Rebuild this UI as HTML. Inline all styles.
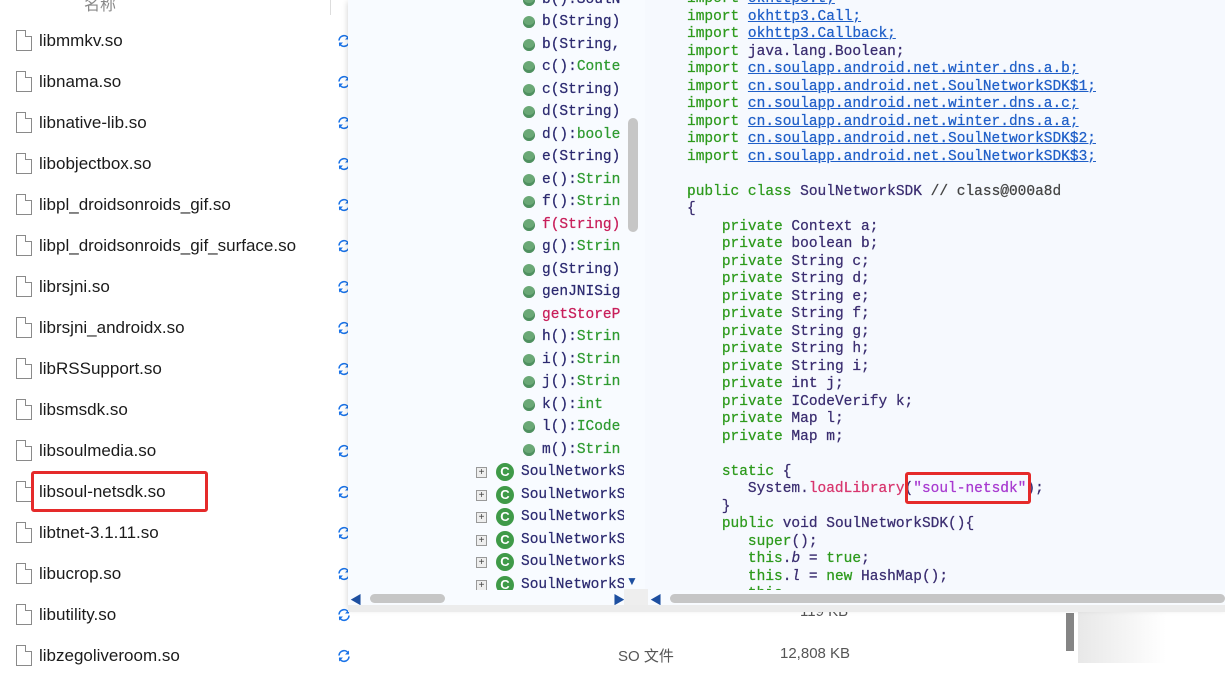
<!DOCTYPE html>
<html><head><meta charset="utf-8"><style>
*{margin:0;padding:0;box-sizing:border-box}
body{width:1225px;height:663px;overflow:hidden;background:#fff;position:relative;font-family:"Liberation Sans","Noto Sans CJK SC",sans-serif}
.row{position:absolute;left:0;height:41px;width:348px}
.row .ic{position:absolute;left:16px;top:-11px;width:16px;height:21px;border:1px solid #8a8a8a;background:#fff}
.row .ic:after{content:"";position:absolute;right:-1px;top:-1px;width:6px;height:6px;background:#fff;border-left:1px solid #8a8a8a;border-bottom:1px solid #8a8a8a}
.row .nm{position:absolute;left:39px;top:-10px;font-size:17px;color:#1b1b1b;white-space:nowrap}
.row svg{position:absolute;left:337px;top:-7px}
.ov{position:absolute;left:348px;top:0;width:877px;height:607px;background:#f8fbff;box-shadow:0 2px 6px rgba(0,0,0,.2)}
.mono{font-family:"Liberation Mono","DejaVu Sans Mono",monospace;font-size:14.5px;white-space:pre;-webkit-text-stroke:0.25px}
.tree{position:absolute;left:0;top:0;width:276px;height:590px;overflow:hidden}
.tr{position:absolute;height:22px;line-height:22px;white-space:pre}
.dot{position:absolute;left:175px;top:5px;width:12px;height:12px;border-radius:50%;background:#6aa876;box-shadow:inset 0 -3px 0 #4f9060}
.tt{position:absolute;left:194px;top:0;color:#2c2a70}
.g{color:#2f9b31}.r{color:#c81e5a}
.plus{position:absolute;left:128px;top:6px;width:11px;height:11px;border:1px solid #999;background:#eee;font-size:10px;line-height:9px;text-align:center;color:#444;font-family:"Liberation Sans",sans-serif;-webkit-text-stroke:0}
.cic{position:absolute;left:148px;top:2px;width:18px;height:18px;border-radius:50%;background:#3f9a48;color:#fff;font:bold 13px/18px "Liberation Sans",sans-serif;text-align:center;-webkit-text-stroke:0}
.code{position:absolute;left:297px;top:0;width:580px;height:590px;overflow:hidden;background:#f6f9fe}
.cd{position:absolute;left:42px;top:-9px;line-height:17.5px;color:#3a2d70}
.k{color:#2d9a1c}.u{color:#1f5fc8;text-decoration:underline}.m{color:#d8366e}.s{color:#a83ad0}.c{color:#444}
.box{position:absolute;border:3px solid #e52a2a;border-radius:3px}
</style></head><body>
<svg width="0" height="0" style="position:absolute"><defs><symbol id="sy" viewBox="0 0 14 14"><path d="M2 6.5A5 5 0 0 1 11.5 4.5M12 7.5A5 5 0 0 1 2.5 9.5" fill="none" stroke="#1a73e8" stroke-width="1.6"/><path d="M12 1.5v4h-4z" fill="#1a73e8"/><path d="M2 12.5v-4h4z" fill="#1a73e8"/></symbol></defs></svg>
<div style="position:absolute;left:84px;top:-9px;font-size:16px;color:#888">名称</div>
<div style="position:absolute;left:330px;top:0;width:1px;height:15px;background:#ddd"></div>

<div class="row" style="top:41px"><div class="ic"></div><div class="nm">libmmkv.so</div><svg width="14" height="14"><use href="#sy"/></svg></div>
<div class="row" style="top:82px"><div class="ic"></div><div class="nm">libnama.so</div><svg width="14" height="14"><use href="#sy"/></svg></div>
<div class="row" style="top:123px"><div class="ic"></div><div class="nm">libnative-lib.so</div><svg width="14" height="14"><use href="#sy"/></svg></div>
<div class="row" style="top:164px"><div class="ic"></div><div class="nm">libobjectbox.so</div><svg width="14" height="14"><use href="#sy"/></svg></div>
<div class="row" style="top:205px"><div class="ic"></div><div class="nm">libpl_droidsonroids_gif.so</div><svg width="14" height="14"><use href="#sy"/></svg></div>
<div class="row" style="top:246px"><div class="ic"></div><div class="nm">libpl_droidsonroids_gif_surface.so</div><svg width="14" height="14"><use href="#sy"/></svg></div>
<div class="row" style="top:287px"><div class="ic"></div><div class="nm">librsjni.so</div><svg width="14" height="14"><use href="#sy"/></svg></div>
<div class="row" style="top:328px"><div class="ic"></div><div class="nm">librsjni_androidx.so</div><svg width="14" height="14"><use href="#sy"/></svg></div>
<div class="row" style="top:369px"><div class="ic"></div><div class="nm">libRSSupport.so</div><svg width="14" height="14"><use href="#sy"/></svg></div>
<div class="row" style="top:410px"><div class="ic"></div><div class="nm">libsmsdk.so</div><svg width="14" height="14"><use href="#sy"/></svg></div>
<div class="row" style="top:451px"><div class="ic"></div><div class="nm">libsoulmedia.so</div><svg width="14" height="14"><use href="#sy"/></svg></div>
<div class="row" style="top:492px"><div class="ic"></div><div class="nm">libsoul-netsdk.so</div><svg width="14" height="14"><use href="#sy"/></svg></div>
<div class="row" style="top:533px"><div class="ic"></div><div class="nm">libtnet-3.1.11.so</div><svg width="14" height="14"><use href="#sy"/></svg></div>
<div class="row" style="top:574px"><div class="ic"></div><div class="nm">libucrop.so</div><svg width="14" height="14"><use href="#sy"/></svg></div>
<div class="row" style="top:615px"><div class="ic"></div><div class="nm">libutility.so</div><svg width="14" height="14"><use href="#sy"/></svg></div>
<div class="row" style="top:656px"><div class="ic"></div><div class="nm">libzegoliveroom.so</div><svg width="14" height="14"><use href="#sy"/></svg></div>
<div class="box" style="left:31px;top:471px;width:177px;height:41px"></div>

<div style="position:absolute;left:618px;top:645px;font-size:15px;color:#555">SO 文件</div>
<div style="position:absolute;left:780px;top:645px;font-size:15px;color:#555">12,808 KB</div>
<div style="position:absolute;left:800px;top:603px;font-size:15px;color:#555">119 KB</div>
<div style="position:absolute;left:1066px;top:613px;width:8px;height:38px;background:#858585"></div>
<div style="position:absolute;left:1078px;top:612px;width:147px;height:51px;background:linear-gradient(90deg,#e8e8e8,#fff 60%)"></div>

<div class="ov">
 <div class="tree mono">
  <div class="tr" style="top:-11px"><div class="dot"></div><span class="tt">b():SoulN</span></div>
  <div class="tr" style="top:11px"><div class="dot"></div><span class="tt">b(String)</span></div>
  <div class="tr" style="top:34px"><div class="dot"></div><span class="tt">b(String,</span></div>
  <div class="tr" style="top:56px"><div class="dot"></div><span class="tt">c():<span class="g">Conte</span></span></div>
  <div class="tr" style="top:79px"><div class="dot"></div><span class="tt">c(String)</span></div>
  <div class="tr" style="top:101px"><div class="dot"></div><span class="tt">d(String)</span></div>
  <div class="tr" style="top:124px"><div class="dot"></div><span class="tt">d():<span class="g">boole</span></span></div>
  <div class="tr" style="top:146px"><div class="dot"></div><span class="tt">e(String)</span></div>
  <div class="tr" style="top:169px"><div class="dot"></div><span class="tt">e():<span class="g">Strin</span></span></div>
  <div class="tr" style="top:191px"><div class="dot"></div><span class="tt">f():<span class="g">Strin</span></span></div>
  <div class="tr" style="top:214px"><div class="dot"></div><span class="tt r">f(String)</span></div>
  <div class="tr" style="top:236px"><div class="dot"></div><span class="tt">g():<span class="g">Strin</span></span></div>
  <div class="tr" style="top:259px"><div class="dot"></div><span class="tt">g(String)</span></div>
  <div class="tr" style="top:281px"><div class="dot"></div><span class="tt">genJNISig</span></div>
  <div class="tr" style="top:304px"><div class="dot"></div><span class="tt r">getStoreP</span></div>
  <div class="tr" style="top:326px"><div class="dot"></div><span class="tt">h():<span class="g">Strin</span></span></div>
  <div class="tr" style="top:349px"><div class="dot"></div><span class="tt">i():<span class="g">Strin</span></span></div>
  <div class="tr" style="top:371px"><div class="dot"></div><span class="tt">j():<span class="g">Strin</span></span></div>
  <div class="tr" style="top:394px"><div class="dot"></div><span class="tt">k():<span class="g">int</span></span></div>
  <div class="tr" style="top:416px"><div class="dot"></div><span class="tt">l():<span class="g">ICode</span></span></div>
  <div class="tr" style="top:439px"><div class="dot"></div><span class="tt">m():<span class="g">Strin</span></span></div>
  <div class="tr" style="top:461px;left:0;width:276px"><div class="plus">+</div><div class="cic">C</div><span class="tt" style="left:173px">SoulNetworkS</span></div>
  <div class="tr" style="top:484px;width:276px"><div class="plus">+</div><div class="cic">C</div><span class="tt" style="left:173px">SoulNetworkS</span></div>
  <div class="tr" style="top:506px;width:276px"><div class="plus">+</div><div class="cic">C</div><span class="tt" style="left:173px">SoulNetworkS</span></div>
  <div class="tr" style="top:529px;width:276px"><div class="plus">+</div><div class="cic">C</div><span class="tt" style="left:173px">SoulNetworkS</span></div>
  <div class="tr" style="top:551px;width:276px"><div class="plus">+</div><div class="cic">C</div><span class="tt" style="left:173px">SoulNetworkS</span></div>
  <div class="tr" style="top:574px;width:276px"><div class="plus">+</div><div class="cic">C</div><span class="tt" style="left:173px">SoulNetworkS</span></div>
 </div>
 <div style="position:absolute;left:276px;top:0;width:20px;height:590px;background:#f8fbff"></div>
 <div style="position:absolute;left:280px;top:118px;width:10px;height:114px;border-radius:5px;background:#c6c6c6"></div>
 <div style="position:absolute;left:278px;top:574px;color:#1d4fa0;font-size:12px">▼</div>
 <div class="code mono">
  <div class="cd"><span class="k">import</span> <span class="u">okhttp3.t;</span>
<span class="k">import</span> <span class="u">okhttp3.Call;</span>
<span class="k">import</span> <span class="u">okhttp3.Callback;</span>
<span class="k">import</span> java.lang.Boolean;
<span class="k">import</span> <span class="u">cn.soulapp.android.net.winter.dns.a.b;</span>
<span class="k">import</span> <span class="u">cn.soulapp.android.net.SoulNetworkSDK$1;</span>
<span class="k">import</span> <span class="u">cn.soulapp.android.net.winter.dns.a.c;</span>
<span class="k">import</span> <span class="u">cn.soulapp.android.net.winter.dns.a.a;</span>
<span class="k">import</span> <span class="u">cn.soulapp.android.net.SoulNetworkSDK$2;</span>
<span class="k">import</span> <span class="u">cn.soulapp.android.net.SoulNetworkSDK$3;</span>

<span class="k">public class</span> SoulNetworkSDK <span class="c">// class@000a8d</span>
{
    <span class="k">private</span> Context a;
    <span class="k">private</span> boolean b;
    <span class="k">private</span> String c;
    <span class="k">private</span> String d;
    <span class="k">private</span> String e;
    <span class="k">private</span> String f;
    <span class="k">private</span> String g;
    <span class="k">private</span> String h;
    <span class="k">private</span> String i;
    <span class="k">private</span> int j;
    <span class="k">private</span> ICodeVerify k;
    <span class="k">private</span> Map l;
    <span class="k">private</span> Map m;

    <span class="k">static</span> {
       System.<span class="m">loadLibrary</span>(<span class="s">"soul-netsdk"</span>);
    }
    <span class="k">public</span> void SoulNetworkSDK(){
       <span class="k">super</span>();
       <span class="k">this</span>.<i>b</i> = <span class="k">true</span>;
       <span class="k">this</span>.<i>l</i> = <span class="k">new</span> HashMap();
       <span class="k">this</span>.</div>
 </div>
 <div style="position:absolute;left:0;top:590px;width:877px;height:17px;background:#f8fbff"></div>
 <div style="position:absolute;left:2px;top:591px;color:#1d4fa0;font-size:12px">◀</div>
 <div style="position:absolute;left:22px;top:594px;width:75px;height:9px;border-radius:5px;background:#c6c6c6"></div>
 <div style="position:absolute;left:265px;top:591px;color:#1d4fa0;font-size:12px">▶</div>
 <div style="position:absolute;left:276px;top:589px;width:24px;height:22px;background:#eee"></div>
 <div style="position:absolute;left:302px;top:591px;color:#1d4fa0;font-size:12px">◀</div>
 <div style="position:absolute;left:322px;top:594px;width:555px;height:9px;border-radius:5px;background:#c6c6c6"></div>
</div>
<div style="position:absolute;left:348px;top:605px;width:877px;height:7px;background:#ececec"></div>
<div class="box" style="left:905px;top:472px;width:126px;height:32px"></div>
</body></html>
